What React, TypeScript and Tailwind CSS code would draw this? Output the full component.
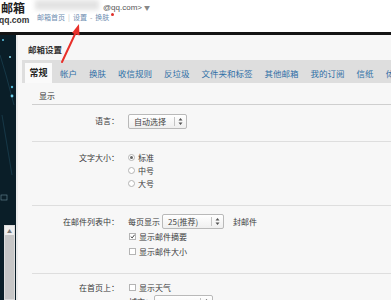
const Select = ({ text, width }: { text: string; width: string }) => (
  <div
    className={`${width} h-[15px] flex items-center border border-[#b9b9b9] rounded-[2px] bg-gradient-to-b from-white to-[#efefef] text-[#444]`}
  >
    <span className="flex-1 pl-[5px] leading-[13px]">{text}</span>
    <span className="w-px h-[9px] bg-[#c4c4c4]" />
    <svg width="11" height="9" viewBox="0 0 11 9">
      <path d="M5.5 1 L7.5 3.5 L3.5 3.5 Z M5.5 8 L7.5 5.5 L3.5 5.5 Z" fill="#555" />
    </svg>
  </div>
);

const Radio = ({ checked, label }: { checked?: boolean; label: string }) => (
  <div className="h-[13px] flex items-center gap-[3px]">
    <span className="w-[7px] h-[7px] rounded-full border border-[#b4b4b4] bg-white flex items-center justify-center">
      {checked && <span className="w-[3px] h-[3px] rounded-full bg-[#666]" />}
    </span>
    <span>{label}</span>
  </div>
);

const Check = ({ checked, label }: { checked?: boolean; label: string }) => (
  <div className="h-[15px] flex items-center gap-[3px]">
    <span className="w-[7px] h-[7px] border border-[#b4b4b4] bg-white flex items-center justify-center">
      {checked && (
        <svg width="7" height="7" viewBox="0 0 7 7">
          <path d="M1 3.5 L3 5.5 L6.5 1" stroke="#333" strokeWidth="1.3" fill="none" />
        </svg>
      )}
    </span>
    <span>{label}</span>
  </div>
);

const tabs = ["帐户", "换肤", "收信规则", "反垃圾", "文件夹和标签", "其他邮箱", "我的订阅", "信纸", "体验室"];

export default function App() {
  return (
    <div className="relative w-[391px] h-[300px] overflow-hidden bg-white font-['Noto_Sans_CJK_SC',sans-serif] text-[8px] text-[#3a3a3a]">
      {/* header */}
      <div className="h-[32px] flex">
        <div className="w-[35px] pt-[2px] pl-[2px] shrink-0">
          <div className="text-[12px] leading-[12px] font-bold text-[#222] -ml-[1px]">邮箱</div>
          <div className="font-['Liberation_Sans',sans-serif] text-[8.5px] leading-[9px] font-bold text-[#333] -ml-[3px] mt-[2px]">
            qq.com
          </div>
        </div>
        <div className="flex flex-col pt-0">
          <div className="flex items-start h-[13px]">
            <div className="w-[64px] h-[10px] bg-[#e3e3e3] blur-[2px]" />
            <span className="ml-[4px] mt-[3px] font-['Liberation_Sans',sans-serif] text-[8px] leading-[9px] text-[#555]">
              @qq.com&gt;
            </span>
            <span className="ml-[2px] mt-[3px] text-[6px] leading-[9px] text-[#888]">▼</span>
          </div>
          <div className="flex items-center h-[8px] ml-[2px] text-[7px] leading-[8px] text-[#6d8db0]">
            <span>邮箱首页</span>
            <span className="mx-[3px] text-[#bbb]">|</span>
            <span>设置</span>
            <span className="mx-[3px] text-[#999]">-</span>
            <span>换肤</span>
            <span className="ml-[2px] -mt-[6px] w-[3px] h-[3px] rounded-full bg-[#e0302a]" />
          </div>
        </div>
      </div>
      <div className="h-[3px] bg-[#141414]" />

      {/* body */}
      <div className="flex h-[265px]">
        <div className="w-[16px] bg-[#0a1e28] flex flex-col justify-end shrink-0">
          <svg width="16" height="190" viewBox="0 0 16 190" className="mb-auto">
            <path d="M0 20 L6 40 L14 70 M2 80 L12 140" stroke="#1e4a5c" strokeWidth="0.6" fill="none" />
            <circle cx="3" cy="5" r="1" fill="#5fc8e6" />
            <circle cx="10" cy="22" r="1" fill="#8adcf0" />
            <circle cx="12" cy="52" r="1.2" fill="#4fb8d8" />
            <circle cx="12" cy="61" r="1.4" fill="#6fd0ea" />
            <rect x="1" y="160" width="6" height="5" fill="none" stroke="#6a8a98" strokeWidth="0.6" />
          </svg>
          <div className="ml-[4px] w-[11px] h-[75px] bg-[#c6c6c6] border border-[#dcdcdc] flex flex-col">
            <div className="h-[9px] bg-[#eeeeee] flex items-center justify-center text-[5px] text-[#777]">▲</div>
          </div>
        </div>
        <div className="w-[2px] bg-[#ececec]" />

        {/* dialog */}
        <div className="flex-1 min-w-0 bg-[#f7f7f7] rounded-tl-[3px] flex flex-col">
          <div className="pt-[9px] pl-[10px] pb-[6px] h-[25px] text-[8.5px] leading-[10px] font-bold text-[#333]">
            邮箱设置
          </div>
          <div className="ml-[4px] h-[23px] shrink-0 bg-[#dedede] flex items-end pl-[3px]">
            <div className="w-[27px] h-[20px] bg-[#fafafa] flex items-center justify-center text-[9px] font-bold text-[#222] shrink-0">
              常规
            </div>
            <div className="flex items-center h-[20px] gap-[12px] ml-[8px] whitespace-nowrap text-[8.5px] text-[#2f6fa6]">
              {tabs.map((t) => (
                <span key={t}>{t}</span>
              ))}
            </div>
          </div>

          <div className="pl-[14px] flex flex-col">
            <div className="pt-[8px] pb-[3px] leading-[10px] pl-[7px] border-b-[1.5px] border-[#cfcfcf] text-[#333]">
              显示
            </div>

            <div className="flex pt-[9px] pb-[12px] border-b border-[#dedede]">
              <div className="w-[87px] h-[14px] flex items-center justify-end">语言：</div>
              <div className="ml-[9px]">
                <Select text="自动选择" width="w-[59px]" />
              </div>
            </div>

            <div className="flex pt-[9px] pb-[15px] border-b border-[#dedede]">
              <div className="w-[87px] h-[13px] flex items-center justify-end">文字大小：</div>
              <div className="ml-[9px] flex flex-col">
                <Radio checked label="标准" />
                <Radio label="中号" />
                <Radio label="大号" />
              </div>
            </div>

            <div className="flex pt-[8px] pb-[14px] border-b border-[#dedede]">
              <div className="w-[87px] h-[15px] flex items-center justify-end">在邮件列表中：</div>
              <div className="ml-[9px] flex flex-col">
                <div className="h-[15px] flex items-center">
                  <span>每页显示</span>
                  <div className="ml-[2px]">
                    <Select text="25(推荐)" width="w-[62px]" />
                  </div>
                  <span className="ml-[9px]">封邮件</span>
                </div>
                <div className="pl-[1px]">
                  <Check checked label="显示邮件摘要" />
                  <Check label="显示邮件大小" />
                </div>
              </div>
            </div>

            <div className="flex pt-[7px]">
              <div className="w-[87px] h-[13px] flex items-center justify-end">在首页上：</div>
              <div className="ml-[9px] flex flex-col pl-[1px]">
                <div className="h-[13px] flex items-center">
                  <Check label="显示天气" />
                </div>
                <div className="h-[15px] flex items-center pt-[1px]">
                  <span>城市：</span>
                  <div className="ml-[1px]">
                    <Select text="" width="w-[59px]" />
                  </div>
                </div>
              </div>
            </div>
          </div>
        </div>
      </div>

      {/* red arrow annotation */}
      <svg className="absolute left-0 top-0" width="391" height="300" viewBox="0 0 391 300">
        <path d="M62 62 L76 32" stroke="#e8302a" strokeWidth="2" strokeLinecap="round" />
        <path d="M79 24 L72 33 L79.5 35.5 Z" fill="#e8302a" />
      </svg>
    </div>
  );
}
